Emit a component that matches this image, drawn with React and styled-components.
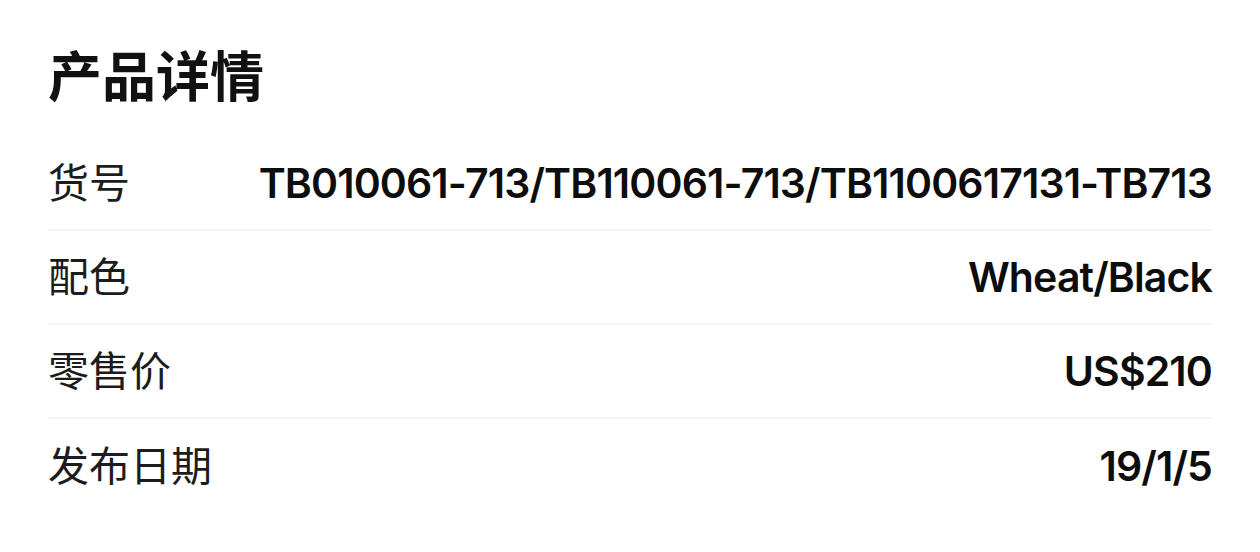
import React from "react";
import styled, { createGlobalStyle } from "styled-components";

const Global = createGlobalStyle`
  html, body { margin: 0; padding: 0; background: #ffffff; }
  body { font-family: "Noto Sans CJK SC", "Noto Sans", sans-serif; }
`;

const Panel = styled.section`
  width: 1260px;
  height: 552px;
  box-sizing: border-box;
  padding: 0 48px;
  background: #ffffff;
`;

const Title = styled.h2`
  margin: 0;
  height: 137px;
  box-sizing: border-box;
  padding-top: 43px;
  font-family: "Noto Sans CJK SC", sans-serif;
  font-size: 54px;
  line-height: 62px;
  font-weight: 700;
  color: #111111;
`;

const List = styled.dl`
  margin: 0;
  display: flex;
  flex-direction: column;
`;

const Row = styled.div`
  height: 94px;
  box-sizing: border-box;
  display: flex;
  align-items: center;
  justify-content: space-between;
  gap: 24px;
  border-bottom: ${(p) => (p.$last ? "none" : "2px solid #f4f4f4")};
`;

const Label = styled.dt`
  margin: 0;
  padding-bottom: 6px;
  font-family: "Noto Sans CJK SC", sans-serif;
  font-size: 41px;
  font-weight: 400;
  color: #1c1c1c;
  white-space: nowrap;
`;

const Value = styled.dd`
  margin: 0;
  font-family: Inter, "Liberation Sans", sans-serif;
  font-size: 41px;
  font-weight: 600;
  color: #0d0d0d;
  letter-spacing: -0.87px;
  white-space: nowrap;
  text-align: right;
`;

const rows = [
  ["货号", "TB010061-713/TB110061-713/TB1100617131-TB713"],
  ["配色", "Wheat/Black"],
  ["零售价", "US$210"],
  ["发布日期", "19/1/5"],
];

export default function App() {
  return (
    <>
      <Global />
      <Panel>
        <Title>产品详情</Title>
        <List>
          {rows.map(([k, v], i) => (
            <Row key={k} $last={i === rows.length - 1}>
              <Label>{k}</Label>
              <Value>{v}</Value>
            </Row>
          ))}
        </List>
      </Panel>
    </>
  );
}
